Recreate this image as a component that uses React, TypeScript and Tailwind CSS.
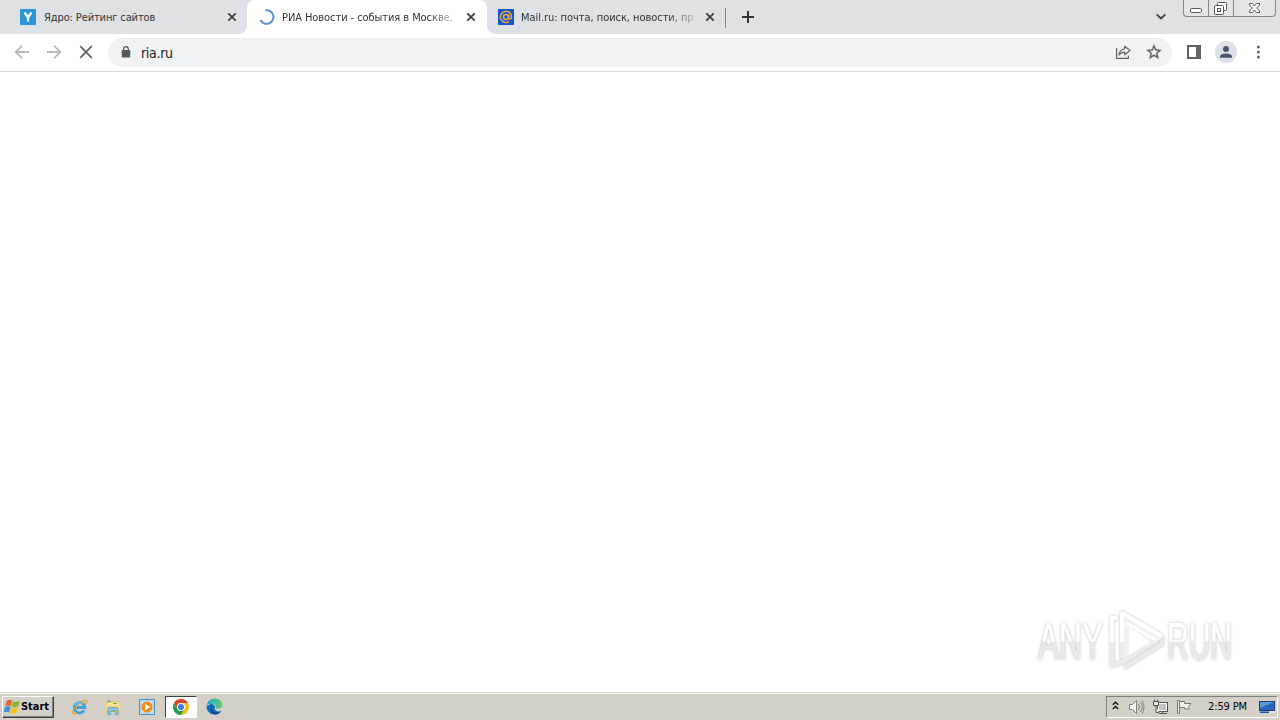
import type { ReactNode } from "react";

const ui = "font-['DejaVu_Sans_Condensed','DejaVu_Sans',sans-serif] [font-stretch:condensed]";

function CloseIcon() {
  return (
    <svg width="10" height="10" viewBox="0 0 10 10" className="shrink-0">
      <path d="M1.3 1.3 8.7 8.7M8.7 1.3 1.3 8.7" stroke="#3c4043" strokeWidth="1.8" />
    </svg>
  );
}

function YandroIcon() {
  return (
    <svg width="16" height="16" viewBox="0 0 16 16" className="shrink-0">
      <rect width="16" height="16" rx="1" fill="#2d95d9" />
      <path d="M4.6 3.5 8 8.4 11.4 3.5M8 7.8v4.6" fill="none" stroke="#fff" strokeWidth="2.3" />
    </svg>
  );
}

function Spinner() {
  return (
    <svg width="16" height="16" viewBox="0 0 16 16" className="shrink-0">
      <path d="M6.3 1.3A6.8 6.8 0 1 1 1.5 11" fill="none" stroke="#5b8fd8" strokeWidth="2" />
    </svg>
  );
}

function MailIcon() {
  return (
    <svg width="16" height="16" viewBox="0 0 16 16" className="shrink-0">
      <rect width="16" height="16" rx="1" fill="#1554d1" />
      <circle cx="8" cy="8" r="2.5" fill="none" stroke="#e9a83b" strokeWidth="1.6" />
      <path d="M10.6 5.5v3.3c0 2 3 1.7 3-.9A5.6 5.6 0 1 0 11 12.7" fill="none" stroke="#e9a83b" strokeWidth="1.5" />
    </svg>
  );
}

function Tab({ icon, title, className, titleClass }: { icon: ReactNode; title: string; className: string; titleClass: string }) {
  return (
    <div className={`flex h-[34px] shrink-0 items-center ${className}`}>
      {icon}
      <span className={`mt-px ml-[7px] overflow-hidden whitespace-nowrap text-[11px] leading-[19px] text-[#30343a] ${titleClass}`}>{title}</span>
      <span className="ml-auto flex"><CloseIcon /></span>
    </div>
  );
}

function WindowControls() {
  return (
    <div className="mr-[4px] flex h-[17px] w-[93px] shrink-0 rounded-b-[4px] border border-t-0 border-[#83878f] bg-[#e1e4e9]">
      <div className="w-[25px] border-r border-[#83878f]">
        <svg width="24" height="16" viewBox="0 0 24 16"><rect x="6.5" y="8.5" width="11" height="4" rx="1" fill="#fff" stroke="#555962" /></svg>
      </div>
      <div className="w-[25px] border-r border-[#83878f]">
        <svg width="24" height="16" viewBox="0 0 24 16" fill="#fff" stroke="#555962">
          <rect x="8.5" y="2.5" width="9" height="8" rx="1" />
          <rect x="5.5" y="5.5" width="9" height="9" rx="1" />
          <rect x="8.5" y="8.5" width="3" height="3" />
        </svg>
      </div>
      <svg width="41" height="16" viewBox="0 0 41 16">
        <path d="M15.5 3.5h3l2 2.5 2-2.5h3V5l-2.8 3 2.8 3v1.5h-3l-2-2.5-2 2.5h-3V11l2.8-3-2.8-3z" fill="#fff" stroke="#555962" />
      </svg>
    </div>
  );
}

function TabStrip() {
  return (
    <header className="flex h-[34px] bg-[#dee1e6]">
      <Tab icon={<YandroIcon />} title="Ядро: Рейтинг сайтов" className="w-[247px] bg-[#dee1e6] pr-[10px] pl-[20px]" titleClass="w-[174px] pl-[1px] tracking-[-0.12px]" />
      <div className="relative w-[240px] shrink-0">
        <span className="absolute bottom-0 left-[-8px] size-2 bg-[radial-gradient(circle_at_0_0,transparent_7.5px,#fff_8px)]" />
        <span className="absolute right-[-8px] bottom-0 size-2 bg-[radial-gradient(circle_at_100%_0,transparent_7.5px,#fff_8px)]" />
        <Tab icon={<Spinner />} title="РИА Новости - события в Москве," className="w-[240px] rounded-t-[8px] bg-white pr-[11px] pl-[12px]" titleClass="w-[174px] tracking-[-0.07px] [mask-image:linear-gradient(to_right,#000_84%,transparent_104%)]" />
      </div>
      <Tab icon={<MailIcon />} title="Mail.ru: почта, поиск, новости, пр" className="w-[228px] pr-0 pl-[11px]" titleClass="w-[174px] tracking-[-0.05px] [mask-image:linear-gradient(to_right,#000_84%,transparent_104%)]" />
      <div className="mt-[8px] ml-[10px] h-[20px] w-px bg-[#80848b]" />
      <svg width="12" height="12" viewBox="0 0 12 12" className="mt-[11px] ml-[16px]"><path d="M6 0v12M0 6h12" stroke="#303338" strokeWidth="2" /></svg>
      <div className="flex-1" />
      <svg width="12" height="8" viewBox="0 0 12 8" className="mt-[13px] mr-[16px]"><path d="m1.6 1.3 4.4 4.2 4.4-4.2" fill="none" stroke="#3c4043" strokeWidth="1.8" /></svg>
      <WindowControls />
    </header>
  );
}

function Toolbar() {
  return (
    <div className="flex h-[38px] items-center border-b border-[#d8dadc] bg-white">
      <div className="-mt-px flex w-[108px] items-center pl-[14px]">
        <svg width="80" height="16" viewBox="0 0 80 16" fill="none" strokeWidth="1.8">
          <path d="M15 8H2M8 1.7 1.7 8 8 14.3" stroke="#b7b9bc" />
          <path d="M33 8h13M40 1.7 46.3 8 40 14.3" stroke="#b7b9bc" />
          <path d="m66.2 2.2 11.6 11.6M77.8 2.2 66.2 13.8" stroke="#5f6368" />
        </svg>
      </div>
      <div className="flex h-[29px] w-[1064px] items-center rounded-full bg-[#f0f3f5] pr-[9px] pl-[13px]">
        <svg width="10" height="12" viewBox="0 0 10 12" className="-mt-px"><rect x=".7" y="4" width="8.6" height="7.5" rx="1" fill="#55585c" /><path d="M2.7 4.5V3a2.3 2.3 0 0 1 4.6 0v1.5" fill="none" stroke="#55585c" strokeWidth="1.2" /></svg>
        <span className="ml-[10px] text-[14px] leading-[20px] tracking-[-0.3px] text-[#202124]">ria.ru</span>
        <svg width="16" height="16" viewBox="0 0 16 16" className="-mt-px ml-auto" fill="none" stroke="#5f6368" strokeWidth="1.2">
          <path d="M1.6 4v10.4h11.8v-3" />
          <path d="M9.7 2.2 15 6.5l-5.3 4.2V8.2C7 8.2 5.2 9.2 4 11c.3-3.5 2.5-5.7 5.7-6z" strokeLinejoin="round" />
        </svg>
        <svg width="18" height="18" viewBox="0 0 24 24" className="-mt-px ml-[14px]" fill="#5f6368" stroke="#5f6368" strokeWidth=".5">
          <path d="m22 9.2-7.2-.6L12 2 9.2 8.6 2 9.2l5.5 4.7L5.8 21l6.2-3.7 6.2 3.7-1.6-7.1zM12 15.4l-3.8 2.3 1-4.3-3.3-2.9 4.4-.4L12 6.1l1.7 4 4.4.4-3.3 2.9 1 4.3z" />
        </svg>
      </div>
      <svg width="14" height="14" viewBox="0 0 14 14" className="-mt-px ml-[15px]"><rect x="1" y="1" width="12" height="12" fill="none" stroke="#5f6368" strokeWidth="2" /><path d="M9 1h4v12H9z" fill="#5f6368" /></svg>
      <svg width="22" height="22" viewBox="0 0 22 22" className="-mt-px ml-[14px]"><circle cx="11" cy="11" r="11" fill="#dce0e7" /><circle cx="11" cy="8" r="3" fill="#4b5670" /><path d="M5 16.8v-1.2c0-4.1 12-4.1 12 0v1.2z" fill="#4b5670" /></svg>
      <svg width="4" height="14" viewBox="0 0 4 14" className="-mt-px ml-[19px]" fill="#5f6368"><circle cx="2.4" cy="2" r="1.5" /><circle cx="2.4" cy="7" r="1.5" /><circle cx="2.4" cy="12" r="1.5" /></svg>
    </div>
  );
}

function Watermark() {
  return (
    <svg width="206" height="76" viewBox="1034 602 206 76" className="mr-[40px] mb-[14px] [filter:drop-shadow(0_0_1.5px_#bdbdbd)]" aria-hidden="true">
      <defs>
        <linearGradient id="fade" x1="0" y1="620" x2="0" y2="660" gradientUnits="userSpaceOnUse">
          <stop offset=".52" stopColor="#fff" /><stop offset=".55" stopColor="#e9e9e9" />
        </linearGradient>
      </defs>
      <g fill="url(#fade)" stroke="url(#fade)" strokeWidth=".7" fontFamily="'Liberation Sans Narrow','Liberation Sans',sans-serif" fontSize="51">
        <text x="1038" y="658.5" textLength="65" lengthAdjust="spacingAndGlyphs">ANY</text>
        <text x="1167" y="658.5" textLength="65" lengthAdjust="spacingAndGlyphs">RUN</text>
      </g>
      <g fill="none" strokeLinejoin="round">
        <path d="M1122 612v52l41-26z" stroke="none" fill="#f1f1f1" />
        <path d="M1129 627v28l21-13z" fill="#fff" />
        <path d="m1158 640-42 25" stroke="#ececec" strokeWidth="3.5" />
        <path d="M1162 636v8l-38 24" stroke="#ebebeb" strokeWidth="3.5" />
        <path d="M1117 618h-5v24M1122 642v-29l40 23" stroke="#fff" strokeWidth="4" />
        <path d="M1112 642v24l5-2M1122 642v16" stroke="#ececec" strokeWidth="4" />
        <path d="m1126 623 30 17" stroke="#fff" strokeWidth="3" />
      </g>
    </svg>
  );
}

function WindowsFlag() {
  return (
    <svg width="17" height="16" viewBox="0 0 17 16">
      <path d="M3 1.6c2-1.1 3.6-1 5.2.1L6.8 7.2C5 6.1 3.2 6.2 1.2 7.2z" fill="#ed652c" />
      <path d="M9 2.2c2 1 4.2.9 7-.4L14.4 7.3c-2.3 1.3-4.6 1.3-6.8.2z" fill="#8ab536" />
      <path d="M1 8.1c1.8-1.1 3.7-1.1 5.5 0L5 13.6c-1.7-1.2-3.7-1-5.4 0z" fill="#398ddc" />
      <path d="M7.2 8.5c2.1 1 4.4.9 6.9-.2l-1.5 5.5c-2.2 1.3-4.6 1.2-6.8.1z" fill="#f4bf28" />
    </svg>
  );
}

function InternetExplorer() {
  return (
    <svg width="17" height="16" viewBox="0 0 17 16" fill="none">
      <path d="M13.1 11.5a5.3 5.3 0 1 1 .8-3H5.2" stroke="#3aa3dc" strokeWidth="2.8" />
      <path d="M4.2 6.2a4.6 4.6 0 0 1 8-1" stroke="#8ed4f2" strokeWidth="1" />
      <path d="M2 14.5C-.4 12.7 7.5 3.9 14 1.4c3.3-1.1 2.2 2 .4 4M2 14.5c1 .6 2.6.1 4.2-.8" stroke="#dda52b" strokeWidth="1.2" />
    </svg>
  );
}

function Explorer() {
  return (
    <svg width="16" height="16" viewBox="0 0 16 16">
      <path d="M1 1.5h6l1 1h6.5V13H1z" fill="#dfbd54" />
      <path d="M2 3.5h12v5H2z" fill="#fff0a5" />
      <path d="M3 1.5h2v2H3z" fill="#4ba4d1" /><path d="M8 4h4v1H8z" fill="#68a845" />
      <path d="M.7 5.5h14.8V12H.7z" fill="#f4da83" />
      <path d="M3 15.5V9.6q0-1 1-1h8q1 0 1 1v5.9h-2.5V12h-5v3.5z" fill="#8bc8e9" stroke="#4f94b9" strokeWidth=".7" />
    </svg>
  );
}

function MediaPlayer() {
  return (
    <svg width="16" height="16" viewBox="0 0 16 16">
      <rect x=".5" y=".5" width="15" height="15" fill="#c8e2f3" stroke="#558fbc" />
      <path d="M2 2h12v12H2z" fill="#dceefa" stroke="#8abbe0" strokeWidth=".6" />
      <circle cx="8" cy="8" r="5.6" fill="#f08b1d" />
      <path d="m6.2 4.8 5 3.2-5 3.2z" fill="#fff" />
    </svg>
  );
}

function Chrome() {
  return (
    <svg width="16" height="16" viewBox="0 0 16 16">
      <circle cx="8" cy="8" r="8" fill="#f7c318" />
      <path d="M1.07 4A8 8 0 0 1 14.93 4H8a4 4 0 0 0-3.46 6z" fill="#df4032" />
      <path d="M1.07 4A8 8 0 0 0 8 16l3.46-6A4 4 0 0 1 4.54 10z" fill="#249c55" />
      <circle cx="8" cy="8" r="4" fill="#fff" /><circle cx="8" cy="8" r="3.1" fill="#4380df" />
    </svg>
  );
}

function Edge() {
  return (
    <svg width="17" height="17" viewBox="0 0 17 17">
      <defs><linearGradient id="edge"><stop stopColor="#20a6df" /><stop offset="1" stopColor="#5bcf63" /></linearGradient></defs>
      <path d="M.5 8.5C.5 13 4 16.5 8.5 16.5c3 0 5.500-1.400 7-3.700-1.800.9-4 .8-5.500-.3C8.300 11.300 8.500 9.600 9.300 8.700L6 5z" fill="#126dbb" />
      <path d="M.5 8.400C1 3.500 4.300.5 8.700.5c4.700 0 7.800 3.100 7.800 6.500 0 3.400-3.600 4.600-6.400 3.200-.9-.5-.2-.9-.2-1.900 0-1.500-1.800-2.800-4-2.800C3.500 5.500 1.400 6.600.5 8.400" fill="url(#edge)" />
      <path d="M6.700 7.500c-3.200 3 .2 8 5 7 1.500-.3 2.900-.9 3.800-1.700a8 8 0 0 1-6.600 3.700C4.800 15.700 3.600 10 6.700 7.500" fill="#123f83" />
    </svg>
  );
}

function Tray() {
  return (
    <div className="mr-[2px] flex h-[22px] w-[172px] items-center border border-t-[#808080] border-r-white border-b-white border-l-[#808080] pl-[6px]">
      <svg width="7" height="9" viewBox="0 0 7 9" fill="none" stroke="#111" strokeWidth="1.4" className="-mt-[3px] -ml-px"><path d="m.8 3.7 2.7-2.5 2.7 2.5M.8 8l2.7-2.5L6.2 8" /></svg>
      <svg width="17" height="16" viewBox="0 0 17 16" className="ml-[9px]" fill="none" stroke="#85827e">
        <path d="M1.500 5.500h3l4-4v13l-4-4h-3z" fill="#f5f5f5" /><path d="M10.500 5q2 3 0 6M12.500 3q3.500 5 0 10M14.200 1.500q3.700 6.500 0 13" />
      </svg>
      <svg width="17" height="16" viewBox="0 0 17 16" className="ml-[7px]" fill="none" stroke="#55534f">
        <rect x="5.500" y="3.500" width="10" height="9" fill="#c2c2c2" /><path d="M6.500 4.500h8v7h-8z" stroke="#fff" />
        <path d="M7 14.500h8M10.500 12.500v2" /><path d="M1.500 2.500v4h5v-4zM2.500.500v2M5.500.500v2M4 6.500v7h3" fill="#eee" />
      </svg>
      <svg width="17" height="16" viewBox="0 0 17 16" className="ml-[7px]" fill="#f3f3f3" stroke="#77746f">
        <path d="M1.500 1.500h2v13h-2z" /><path d="M3.500 2.500h5v2h6.500l-2.500 3 1 2.500H8.500v-1.500h-5z" />
      </svg>
      <span className="mt-px ml-[15px] w-[42px] whitespace-nowrap text-[11px] leading-[16px] tracking-[-0.12px]">2:59 PM</span>
      <svg width="16" height="14" viewBox="0 0 16 14" className="ml-[9px]">
        <rect x=".5" y="1.500" width="15" height="9" fill="#2866b6" stroke="#173c80" /><path d="M1 2h14L1 8z" fill="#5d99d7" /><path d="M1 11.500h9v1.500H1z" fill="#1d529b" /><path d="M10 11h6v2h-6z" fill="#dce6f2" />
      </svg>
    </div>
  );
}

function Taskbar() {
  return (
    <footer className="flex h-[28px] items-center border-t border-[#d4d0c8] bg-[#d4d0c8] shadow-[inset_0_1px_0_#fff]">
      <button className="ml-[2px] flex h-[22px] w-[52px] items-center border border-t-white border-r-[#404040] border-b-[#404040] border-l-white pl-px shadow-[inset_-1px_-1px_0_#808080]">
        <WindowsFlag /><span className="text-[11px] font-bold leading-[16px] tracking-[-0.05px]">Start</span>
      </button>
      <div className="flex h-[22px] items-center">
        <div className="ml-[17px]"><InternetExplorer /></div>
        <div className="ml-[17px]"><Explorer /></div>
        <div className="ml-[18px]"><MediaPlayer /></div>
        <div className="ml-[10px] flex h-[22px] w-[32px] items-center justify-center border border-t-[#404040] border-r-white border-b-white border-l-[#404040] bg-white"><Chrome /></div>
        <div className="ml-[9px]"><Edge /></div>
      </div>
      <div className="flex-1" />
      <Tray />
    </footer>
  );
}

export default function App() {
  return (
    <div className={`flex h-[720px] w-[1280px] flex-col overflow-hidden bg-white text-black ${ui}`}>
      <TabStrip />
      <Toolbar />
      <main className="flex min-h-0 flex-1 items-end justify-end bg-white"><Watermark /></main>
      <Taskbar />
    </div>
  );
}
